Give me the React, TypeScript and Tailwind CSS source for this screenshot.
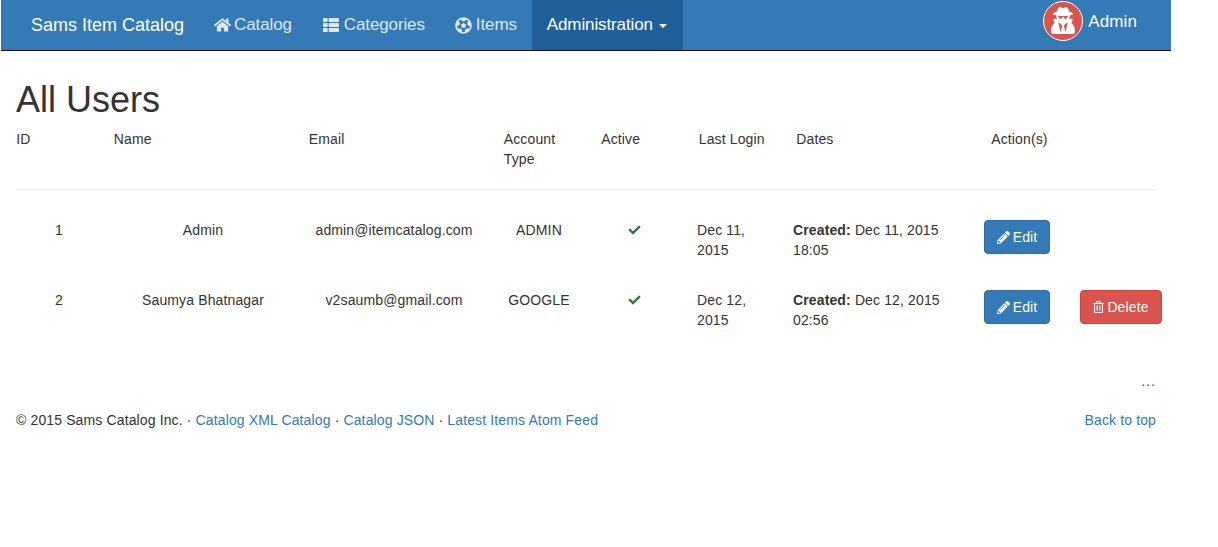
import { FaCheck, FaFutbol, FaHome, FaPencilAlt, FaRegTrashAlt, FaThList, FaUserSecret } from 'react-icons/fa'

const users = [
  { id: 1, name: 'Admin', email: 'admin@itemcatalog.com', type: 'ADMIN', login: 'Dec 11, 2015', created: 'Dec 11, 2015 18:05', canDelete: false },
  { id: 2, name: 'Saumya Bhatnagar', email: 'v2saumb@gmail.com', type: 'GOOGLE', login: 'Dec 12, 2015', created: 'Dec 12, 2015 02:56', canDelete: true },
]

function NavLink({ icon, label }: { icon: React.ReactNode; label: string }) {
  return (
    <a className="flex h-[50px] items-center gap-[3px] px-[15px] text-[17px] tracking-[-0.12px] text-[#dfe8f1]">
      {icon}
      {label}
    </a>
  )
}

function Navbar() {
  return (
    <nav className="ml-px flex h-[51px] w-[1170px] border-b border-[#0f0f0f] bg-[#337ab7] text-white">
      <a className="flex h-[50px] items-center pl-[30px] pr-[15px] text-[18px] tracking-normal">Sams Item Catalog</a>
      <NavLink icon={<FaHome className="h-[16px] w-[17px]" />} label="Catalog" />
      <NavLink icon={<FaThList className="mr-[1px] h-[16px] w-[18px]" />} label="Categories" />
      <NavLink icon={<FaFutbol className="mr-[1px] h-[17px] w-[17px]" />} label="Items" />
      <a className="flex h-[50px] w-[151px] items-center gap-[6px] bg-[#1f5f9c] px-[15px] text-[17px] tracking-[-0.12px]">
        Administration
        <span className="mt-[2px] h-0 w-0 border-x-[4px] border-t-[4px] border-x-transparent border-t-white" />
      </a>
      <div className="ml-auto flex h-[41px] items-center gap-[5px] pr-[34px]">
        <span className="flex h-[40px] w-[40px] items-center justify-center rounded-full border border-white bg-[#d9534f]">
          <FaUserSecret className="h-[27px] w-[24px]" />
        </span>
        <span className="pt-[2px] text-[17px] tracking-[0.1px]">Admin</span>
      </div>
    </nav>
  )
}

function UserRow({ user }: { user: (typeof users)[number] }) {
  return (
    <div className="ml-[10px] grid h-[70px] w-[1152px] grid-cols-12">
      <div className="pl-[2px] text-center">{user.id}</div>
      <div className="col-span-2 pl-[2px] text-center">{user.name}</div>
      <div className="col-span-2 text-center">{user.email}</div>
      <div className="pl-[2px] text-center">{user.type}</div>
      <div className="flex justify-center pt-[4px]">
        <FaCheck className="h-[12px] w-[13px] text-[#3c763d]" />
      </div>
      <div className="px-[15px]">{user.login}</div>
      <div className="col-span-2 px-[15px]">
        <b>Created:</b> {user.created}
      </div>
      <div className="pl-[14px]">
        <button className="flex h-[34px] w-[66px] items-center justify-center gap-[3px] rounded border border-[#2e6da4] bg-[#337ab7] text-white">
          <FaPencilAlt className="h-[13px] w-[13px]" />
          Edit
        </button>
      </div>
      <div className="pl-[14px]">
        {user.canDelete && (
          <button className="flex h-[34px] w-[82px] shrink-0 items-center justify-center gap-[3px] rounded border border-[#d43f3a] bg-[#d9534f] text-white">
            <FaRegTrashAlt className="h-[12px] w-[11px]" />
            Delete
          </button>
        )}
      </div>
    </div>
  )
}

export default function App() {
  return (
    <div className="h-[547px] w-[1218px] overflow-hidden bg-white font-['Liberation_Sans',Arial,sans-serif] text-[14px] leading-[20px] tracking-[0.13px] text-[#333]">
      <Navbar />
      <h1 className="mt-[29px] ml-[16px] text-[36px] leading-[40px] tracking-normal">All Users</h1>
      <div className="ml-[1.25px] grid w-[1170px] grid-cols-12 pt-[9px]">
        <div className="px-[15px]">ID</div>
        <div className="col-span-2 px-[15px]">Name</div>
        <div className="col-span-2 px-[15px]">Email</div>
        <div className="px-[15px]">Account Type</div>
        <div className="px-[15px]">Active</div>
        <div className="px-[15px]">Last Login</div>
        <div className="col-span-2 px-[15px]">Dates</div>
        <div className="col-span-2 px-[15px]">Action(s)</div>
      </div>
      <hr className="mt-[20px] ml-[16px] mb-[30px] w-[1140px] border-t border-[#eee]" />
      {users.map((user) => (
        <UserRow key={user.id} user={user} />
      ))}
      <div className="mt-[11px] ml-[16px] w-[1140px] text-right tracking-[1px] text-[#555]">...</div>
      <footer className="mt-[19px] ml-[16px] flex w-[1140px] justify-between">
        <p>
          © 2015 Sams Catalog Inc. · <a className="text-[#337ab7]">Catalog XML Catalog</a> · <a className="text-[#337ab7]">Catalog JSON</a> · <a className="text-[#337ab7]">Latest Items Atom Feed</a>
        </p>
        <a className="text-[#337ab7]">Back to top</a>
      </footer>
    </div>
  )
}
